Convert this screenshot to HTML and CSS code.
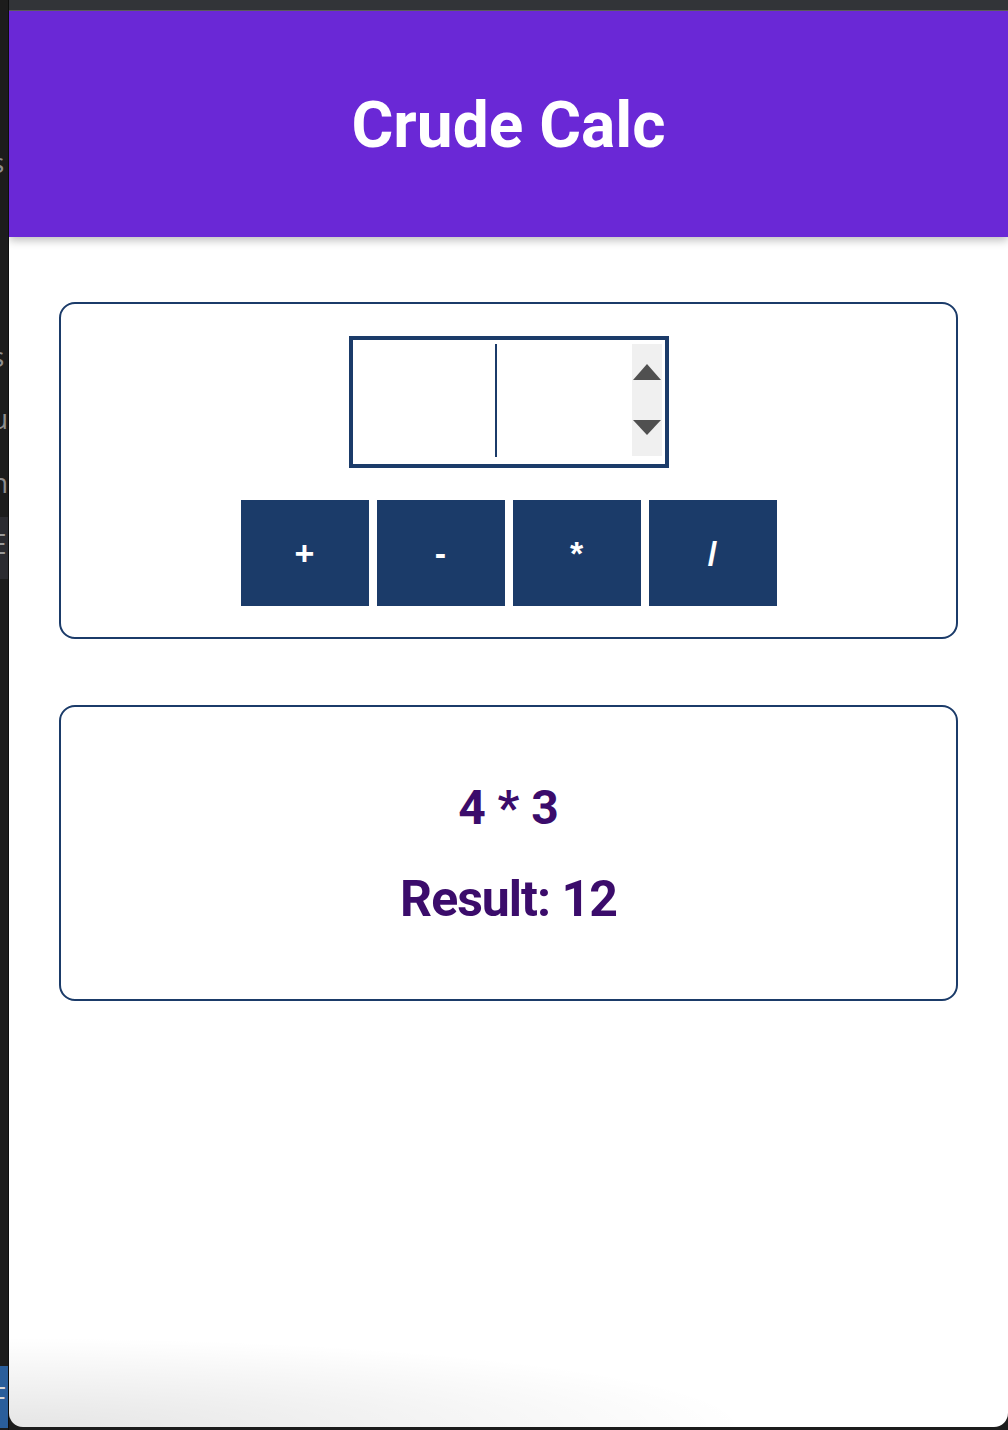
FILE: index.html
```html
<!DOCTYPE html>
<html lang="en">
<head>
<meta charset="utf-8">
<title>Crude Calc</title>
<link rel="stylesheet" href="styles.css">
</head>
<body>
<div class="desktop">
  <div class="side">
    <span class="ghost g1">s</span>
    <span class="ghost g2">j</span>
    <span class="ghost g3">s</span>
    <span class="ghost g4">u</span>
    <span class="ghost g5">n</span>
    <div class="side-block"><span class="ghost g6">E</span></div>
    <div class="side-blue"><span class="ghost g7">F</span></div>
  </div>
  <div class="window">
    <div class="titlebar"></div>
    <div class="page">
      <header class="app-header">
        <h1 class="app-title">Crude Calc</h1>
      </header>
      <main class="content">
        <section class="card card-input">
          <div class="num-field">
            <div class="num-left"></div>
            <div class="caret"></div>
            <div class="num-right"></div>
            <div class="spinner">
              <span class="tri tri-up"></span>
              <span class="tri tri-down"></span>
            </div>
          </div>
          <div class="ops">
            <button class="op">+</button>
            <button class="op">-</button>
            <button class="op">*</button>
            <button class="op">/</button>
          </div>
        </section>
        <section class="card card-result">
          <h2 class="expr">4 * 3</h2>
          <h2 class="result">Result: 12</h2>
        </section>
      </main>
      <div class="bottom-shade"></div>
    </div>
  </div>
</div>
</body>
</html>
```

FILE: styles.css
```css
* { box-sizing: border-box; }

html, body {
  margin: 0;
  padding: 0;
  height: 1430px;
  overflow: hidden;
  background: #1c1c1c;
  font-family: Roboto, "Liberation Sans", sans-serif;
}

.desktop {
  display: flex;
  height: 1430px;
}

.side {
  width: 9px;
  flex: none;
  position: relative;
  overflow: hidden;
  background: #1c1c1c;
  border-right: 1px solid #0d0d0d;
}

.ghost {
  position: absolute;
  left: -9px;
  color: #8e8e8e;
  font-family: "Open Sans", sans-serif;
  font-size: 28px;
  line-height: 1;
}
.g1 { top: 148px; }
.g2 { top: 214px; }
.g3 { top: 342px; }
.g4 { top: 404px; }
.g5 { top: 468px; }
.g6 { top: 12px; color: #9a9a9a; }
.g7 { top: 16px; color: #d8d8d8; }

.side-block {
  position: absolute;
  left: 0; top: 517px;
  width: 8px; height: 62px;
  background: #2b2b30;
}
.side-blue {
  position: absolute;
  left: 0; top: 1366px;
  width: 8px; height: 62px;
  background: #2a5e9b;
}

.window {
  flex: 1;
  display: flex;
  flex-direction: column;
  height: 1427px;
}

.titlebar {
  height: 11px;
  flex: none;
  background: #323438;
  border-bottom: 1px solid #5a5a5a;
}

.page {
  flex: 1;
  position: relative;
  background: #ffffff;
  border-radius: 0 0 14px 14px;
  overflow: hidden;
}

.app-header {
  position: relative;
  z-index: 1;
  height: 226px;
  background: #6a28d6;
  display: flex;
  align-items: center;
  justify-content: center;
  box-shadow: 0 3px 9px rgba(0, 0, 0, 0.28);
}

.app-title {
  margin: 0;
  color: #ffffff;
  font-family: Roboto, sans-serif;
  font-weight: 700;
  font-size: 64px;
  line-height: 1;
  padding-top: 3px;
}

.content {
  padding-top: 65px;
  display: flex;
  flex-direction: column;
  align-items: center;
  gap: 66px;
}

.card {
  width: 899px;
  border: 2px solid #1b3b69;
  border-radius: 16px;
  display: flex;
  flex-direction: column;
  align-items: center;
}

.card-input {
  padding: 32px 0 31px;
  gap: 32px;
}

.num-field {
  width: 320px;
  height: 132px;
  border: 4px solid #1b3b69;
  padding: 4px 3px 4px 0;
  display: flex;
  align-items: flex-start;
}

.num-left {
  width: 142px;
  flex: none;
}

.caret {
  width: 2px;
  height: 113px;
  background: #1b3b69;
  flex: none;
}

.num-right { flex: 1; }

.spinner {
  width: 30px;
  height: 112px;
  flex: none;
  background: #f0f0f0;
  display: flex;
  flex-direction: column;
  align-items: center;
  justify-content: space-between;
  padding: 20px 0 21px;
}

.tri {
  display: block;
  width: 0;
  height: 0;
  border-left: 14px solid transparent;
  border-right: 14px solid transparent;
}
.tri-up { border-bottom: 16px solid #505050; }
.tri-down { border-top: 15px solid #505050; }

.ops {
  display: flex;
  gap: 8px;
}

.op {
  width: 128px;
  height: 106px;
  border: none;
  margin: 0;
  padding: 0;
  background: #1b3b69;
  color: #ffffff;
  font-family: "Liberation Sans", Arial, sans-serif;
  font-weight: 700;
  font-size: 34px;
  cursor: pointer;
}

.card-result {
  padding: 72px 0 71px;
  gap: 34px;
}

.expr, .result {
  margin: 0;
  color: #3b0c6b;
  font-family: Roboto, sans-serif;
  font-weight: 700;
  line-height: normal;
}
.expr { font-size: 48px; }
.result { font-size: 50px; letter-spacing: -1px; }

.bottom-shade {
  position: absolute;
  left: 0;
  bottom: 0;
  width: 100%;
  height: 90px;
  background: radial-gradient(ellipse 740px 90px at 0 100%, rgba(0, 0, 0, 0.1), rgba(0, 0, 0, 0) 100%);
  pointer-events: none;
}
```
